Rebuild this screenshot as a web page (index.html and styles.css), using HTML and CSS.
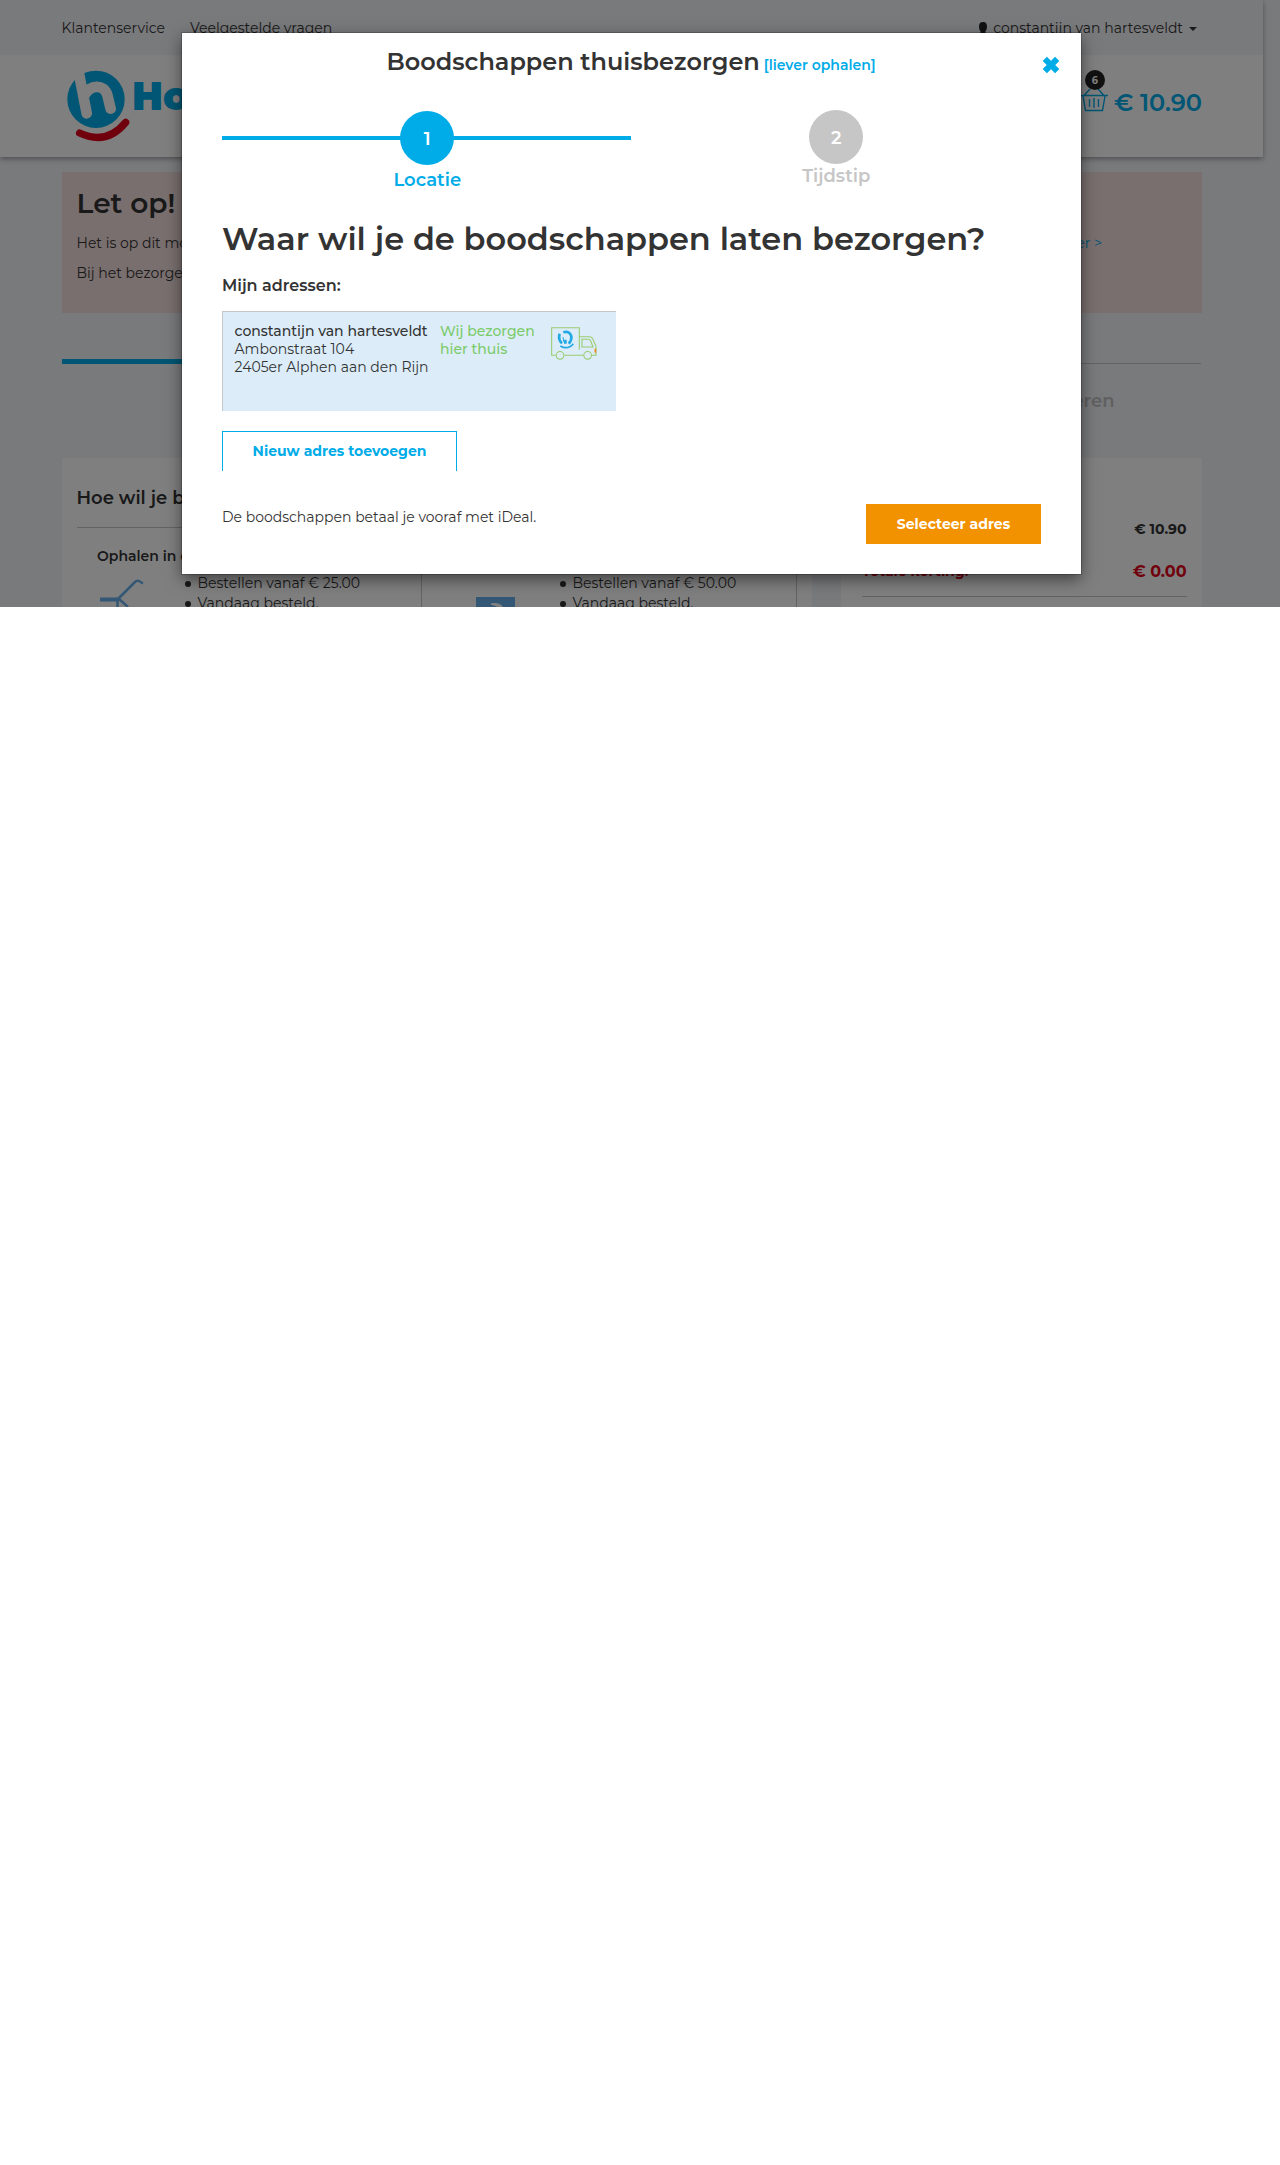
FILE: index.html
```html
<!DOCTYPE html>
<html lang="nl">
<head>
<meta charset="utf-8">
<title>Boodschappen thuisbezorgen</title>
<link rel="stylesheet" href="styles.css">
</head>
<body>
<div class="screen">
  <header class="header">
    <div class="topbar">
      <span>Klantenservice</span>
      <span class="faq">Veelgestelde vragen</span>
      <span class="user">
        <svg class="user-icon" width="10" height="14" viewBox="0 0 10 14"><path d="M5 0C8 0 9 2 9 4.500C9 7 8 9 7.300 9.500V10.500L10 12V14H0V12L2.700 10.500V9.500C2 9 1 7 1 4.500C1 2 2 0 5 0Z" fill="#222"/></svg>
        <span>constantijn van hartesveldt</span>
        <span class="caret"></span>
      </span>
    </div>
    <div class="brand">
      <svg class="logo" width="72" height="80" viewBox="186 195 216 240">
        <circle cx="288" cy="298" r="86" fill="#00ace8"/>
        <path d="M233 200L260 340M256 282C270 256 311 250 322 285L332 326" fill="none" stroke="#fff" stroke-width="32" stroke-linecap="round"/>
        <path d="M239 399Q320 437 377 367" fill="none" stroke="#e2001a" stroke-width="22" stroke-linecap="round"/>
      </svg>
      <span class="logo-name">Hoogvliet</span>
      <span class="cart">
        <svg width="28" height="24" viewBox="0 0 28 24" fill="none" stroke="#00ace8" stroke-width="1.400"><path d="M0 7.500H28M3 8L5.500 22.500H22.500L25 8M4 7.500L10 1M24 7.500L18 1M9.500 11V19M14 10V20M18.500 11V19"/></svg>
        <span class="badge">6</span>
      </span>
      <span class="price">€ 10.90</span>
    </div>
  </header>
  <section class="notice">
    <h2 class="notice-title">Let op!</h2>
    <p class="notice-row"><span>Het is op dit moment</span><a class="more">Lees meer &gt;</a></p>
    <p class="notice-row"><span>Bij het bezorgen</span></p>
  </section>
  <div class="steps">
    <div class="step-done"></div>
    <div class="step-todo"><span class="step-label">Controleren</span></div>
  </div>
  <div class="panels">
    <section class="panel main">
      <h3 class="main-title">Hoe wil je bestellen?</h3>
      <div class="options">
        <div class="option">
          <h4 class="option-title">Ophalen in de winkel</h4>
          <div class="option-body">
            <svg class="cart-art" width="46" height="28" viewBox="0 0 46 28" fill="none" stroke="#67aeea"><path d="M0 20.500H19" stroke-width="4"/><path d="M18 20L35 3Q37 1 39 2L43 4.500M17.500 20V28M19 20L28 28" stroke-width="2.500"/></svg>
            <ul><li>Bestellen vanaf € 25.00</li><li>Vandaag besteld,</li></ul>
          </div>
        </div>
        <div class="option second">
          <h4 class="option-title">Laten bezorgen</h4>
          <div class="option-body">
            <svg class="box-art" width="40" height="11" viewBox="0 0 40 11"><path d="M0 1H39V11H0Z" fill="#67aeea"/><path d="M15 8Q24 7 26 11H23Q20 9 15 8Z" stroke="#fff" stroke-width="1.500" fill="#fff"/></svg>
            <ul><li>Bestellen vanaf € 50.00</li><li>Vandaag besteld,</li></ul>
          </div>
        </div>
      </div>
    </section>
    <aside class="panel totals">
      <div class="sum">€ 10.90</div>
      <div class="discount"><span>Totale korting:</span><span class="discount-value">€ 0.00</span></div>
    </aside>
  </div>
  <div class="backdrop">
    <div class="modal">
      <div class="modal-head">
        <h1 class="modal-title">Boodschappen thuisbezorgen</h1>
        <a class="pickup">[liever ophalen]</a>
        <svg class="close" width="18" height="18" viewBox="0 0 18 18"><path d="M2.800 2.800L15.200 15.200M15.200 2.800L2.800 15.200" stroke="#00ace8" stroke-width="6"/></svg>
      </div>
      <div class="wizard">
        <div class="wiz active"><span class="dot">1</span><span>Locatie</span></div>
        <div class="wiz"><span class="dot">2</span><span>Tijdstip</span></div>
      </div>
      <h2 class="question">Waar wil je de boodschappen laten bezorgen?</h2>
      <p class="mine">Mijn adressen:</p>
      <div class="address">
        <div class="lines"><b class="name">constantijn van hartesveldt</b><span>Ambonstraat 104</span><span>2405er Alphen aan den Rijn</span></div>
        <div class="lines green"><span>Wij bezorgen</span><span>hier thuis</span></div>
        <svg class="truck" width="46" height="33" viewBox="0 0 138 99" fill="none" stroke="#99cb6e" stroke-width="3.200">
          <path d="M14 85H2V2H85V68M85 29H116Q122 29 125 35L135 58V85H123M40 85H98M93 37H113Q117 37 119 42L126 60H93Z"/>
          <circle cx="27" cy="85" r="11.500"/><circle cx="110" cy="85" r="11.500"/>
          <path d="M133 65V77" stroke="#f08a24" stroke-width="5"/>
          <path d="M26 20Q20 36 33 49M37 16Q56 10 61 28Q63 40 53 50M43 50V38" stroke="#20a9e4" stroke-width="8"/>
          <path d="M36 30L38 44" stroke="#20a9e4" stroke-width="3"/>
          <path d="M28 57Q50 70 67 50" stroke="#20a9e4" stroke-width="5"/>
        </svg>
      </div>
      <button class="add">Nieuw adres toevoegen</button>
      <div class="modal-foot">
        <span class="pay-note">De boodschappen betaal je vooraf met iDeal.</span>
        <button class="select">Selecteer adres</button>
      </div>
    </div>
  </div>
</div>
</body>
</html>
```
FILE: styles.css
```css
* { box-sizing: border-box; }
body { margin: 0; background: #fff; color: #333; font-family: Montserrat, Inter, sans-serif; font-size: 14px; font-weight: 400; line-height: 20px; }
h1, h2, h3, h4, p, ul { margin: 0; padding: 0; }
button { font: inherit; padding: 0; }
svg { display: block; flex: none; }
span, a, h1, h2, h3, h4, b, li { white-space: nowrap; }

.screen { position: relative; height: 607px; overflow: hidden; background: #f2f4f8; }
.header { width: 1263px; height: 157px; background: #fff; box-shadow: 0 2px 5px rgba(0,0,0,.35); }
.topbar { display: flex; height: 55px; padding: 18px 66px 0 61.5px; background: #f2f4f8; }
.faq { margin-left: 25px; }
.user { display: flex; margin-left: auto; }
.user-icon { margin: 4px 5px 0 0; }
.caret { margin: 9px 0 0 6px; width: 0; height: 0; border: 4px solid transparent; border-top-color: #333; border-bottom: 0; }
.brand { display: flex; height: 102px; padding: 10px 61px 0 62px; color: #00ace8; }
.logo-name { margin-left: -2px; font-size: 38.5px; font-weight: 900; line-height: 50px; padding-top: 7px; }
.cart { position: relative; margin: 22px 6px 0 auto; }
.badge { position: absolute; left: 5px; top: -17px; width: 20px; height: 20px; border-radius: 50%; background: #222; color: #fff; font-family: "Open Sans", sans-serif; font-size: 11px; font-weight: 700; text-align: center; }
.cart svg { margin-top: 1px; }
.price { font-size: 24px; font-weight: 600; line-height: 30px; padding-top: 23px; }

.notice { width: 1140px; height: 141px; margin: 15px 0 0 62px; padding: 13px 100px 0 14.5px; background: #f2dede; }
.notice-title { font-size: 28px; font-weight: 600; line-height: 36px; }
.notice-row { display: flex; justify-content: space-between; height: 20px; margin-top: 12px; }
.notice-row + .notice-row { margin-top: 10px; }
.more { color: #00ace8; }
.steps { display: flex; width: 1139px; height: 99px; margin: 46px 0 0 62px; }
.step-done { flex: 1; height: 5px; background: #00ace8; }
.step-todo { flex: 1; margin-top: 4px; border-top: 1px solid #c6c6c6; text-align: right; padding: 25px 86.5px 0 0; }
.step-label { color: #c0c0c0; font-size: 18px; font-weight: 600; line-height: 24px; }

.panels { display: flex; gap: 29px; width: 1140px; height: 160px; margin-left: 62px; }
.panel { background: #fff; }
.main { width: 750px; padding: 27px 15px 0; }
.main-title { height: 43px; border-bottom: 1px solid #c6c6c6; font-size: 18px; font-weight: 600; line-height: 26px; text-indent: -.5px; }
.options { display: flex; }
.option { width: 345px; height: 100px; padding: 13px 0 0 20px; border-right: 1px solid #c6c6c6; }
.second { width: 375px; }
.option-title { font-size: 14px; font-weight: 600; line-height: 30px; }
.option-body { display: flex; padding-top: 2px; }
.option-body ul { list-style: none; }
.option-body li { display: flex; align-items: center; }
.option-body li::before { content: ""; width: 6px; height: 6px; margin: 1px 7px 0 0; border-radius: 50%; background: #333; }
.cart-art { margin: 6px 38.5px 0 3px; }
.box-art { margin: 23px 43.5px 0 34px; }
.totals { width: 361px; padding: 60px 15.5px 0 21px; }
.sum { font-size: 14px; font-weight: 700; line-height: 22px; text-align: right; }
.discount { display: flex; justify-content: space-between; height: 57px; padding-top: 20px; border-bottom: 1px solid #c6c6c6; color: #e2001a; font-size: 14px; font-weight: 700; line-height: 23px; }
.discount-value { font-size: 16px; line-height: 24px; }

.backdrop { position: absolute; inset: 0; padding: 33px 0 0 182px; background: rgba(0,0,0,.5); }
.modal { width: 899px; height: 541px; padding: 0 40px; background: #fff; box-shadow: 0 0 0 1px rgba(0,0,0,.2), 0 5px 15px rgba(0,0,0,.5); }
.modal-head { display: flex; align-items: baseline; height: 77px; padding: 13px 0 0 164.5px; }
.modal-title { font-size: 24px; font-weight: 600; line-height: 32px; }
.pickup { margin-left: 4px; color: #00ace8; font-size: 14px; font-weight: 600; }
.close { align-self: flex-start; margin: 9.5px -18.5px 0 auto; }
.wizard { display: flex; height: 102px; }
.wiz { display: flex; flex-direction: column; align-items: center; width: 409px; padding-left: 1.5px; color: #c6c6c6; font-size: 18px; font-weight: 600; line-height: 28px; }
.dot { width: 54px; height: 54px; border-radius: 50%; background: #c6c6c6; color: #fff; line-height: 56px; text-align: center; margin-bottom: -2px; }
.active { padding-top: 1px; color: #00ace8; background: linear-gradient(#00ace8, #00ace8) 0 26px / 100% 4px no-repeat; }
.active .dot { background: #00ace8; margin-bottom: 1px; }
.question { font-size: 32px; font-weight: 600; line-height: 54px; }
.mine { padding-top: 8px; font-size: 16px; font-weight: 600; line-height: 24px; }
.address { display: flex; width: 394px; height: 100px; margin-top: 13px; padding: 10px 12px 10px 11.5px; border: solid #c6c6c6; border-width: 1px 0 0 1px; background: #dcedf9; line-height: 18px; }
.lines { display: flex; flex-direction: column; width: 205.5px; }
.name { font-weight: 500; }
.green { width: 111px; color: #7ccb6a; font-weight: 500; }
.truck { margin-top: 5px; }
.add { display: block; width: 235px; height: 40px; margin-top: 20px; padding-bottom: 1px; border: solid #00ace8; border-width: 1px 1px 0; background: #fff; color: #00ace8; font-size: 14px; font-weight: 700; }
.modal-foot { display: flex; justify-content: space-between; padding-top: 33px; }
.pay-note { padding-top: 3px; }
.select { width: 175px; height: 40px; border: 0; background: #f39200; color: #fff; font-size: 14px; font-weight: 700; }
```
